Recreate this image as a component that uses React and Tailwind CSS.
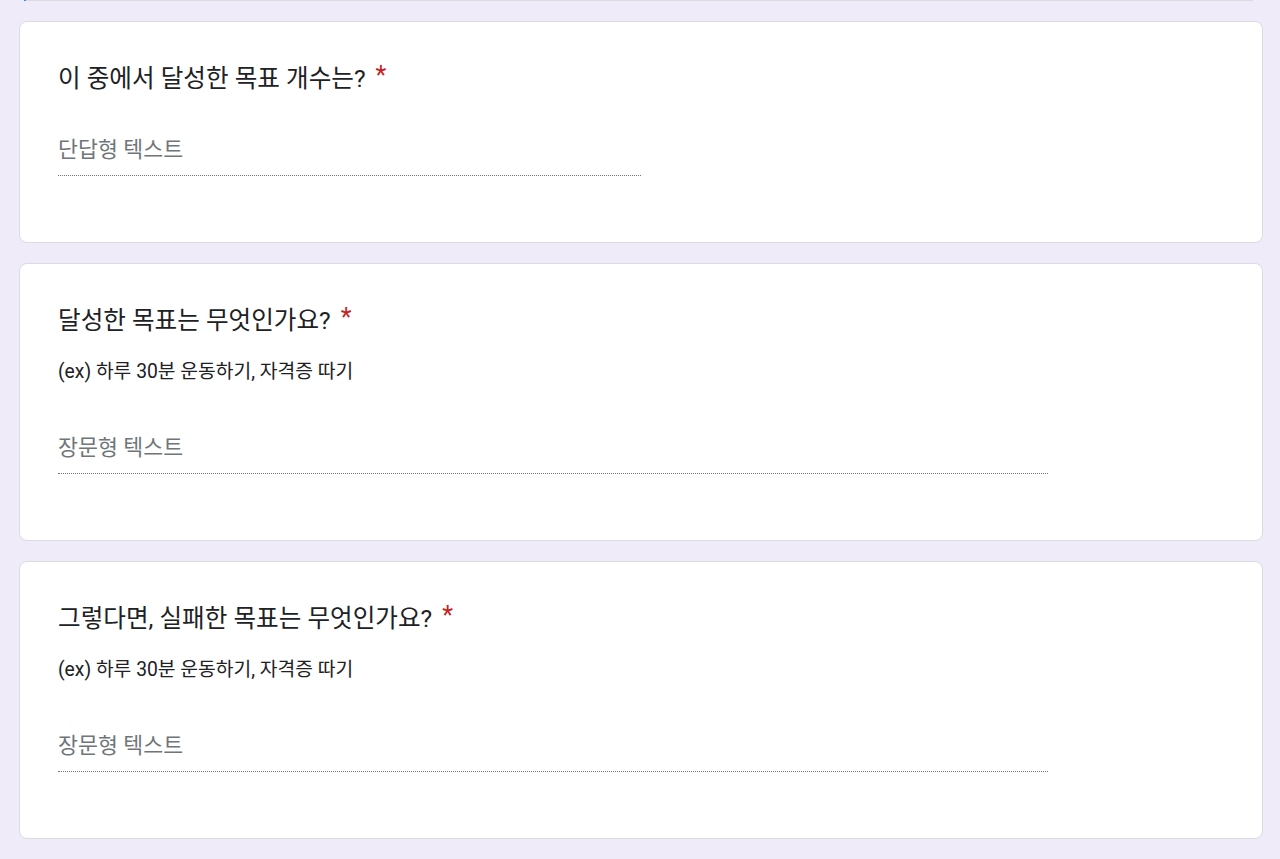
import React from "react";

const font = { fontFamily: 'Roboto, "Noto Sans CJK KR", sans-serif' };

function Card({ title, desc, placeholder, lineW }) {
  return (
    <div className="bg-white border border-[#dadce0] rounded-lg pt-[41px] pb-[66px] pl-[38px] pr-[38px]">
      <div className="flex items-start h-[32px] leading-[32px] text-[24.6px] text-[#202124]">
        <span>{title}</span>
        <span className="text-[#c5221f] ml-[10px] leading-[26px] text-[25px]">*</span>
      </div>
      {desc && (
        <div className="mt-[23px] h-[24px] leading-[24px] text-[19.3px] text-[#202124]">{desc}</div>
      )}
      <div
        className={`${desc ? "mt-[50px]" : "mt-[41px]"} h-[40px] pb-[11px] border-b border-dotted border-[#70757a] leading-[28px] text-[21.7px] text-[#70757a]`}
        style={{ width: lineW }}
      >
        {placeholder}
      </div>
    </div>
  );
}

export default function App() {
  return (
    <div className="min-h-screen bg-[#efebf8] pb-[20px]" style={font}>
      <div className="flex h-px ml-[24px] mr-[27px]">
        <div className="w-[2px] bg-[#4285f4]" />
        <div className="flex-1 bg-[#dadce0]" />
      </div>
      <div className="flex flex-col gap-[20px] mt-[20px] ml-[19px] mr-[17px]">
        <Card title="이 중에서 달성한 목표 개수는?" placeholder="단답형 텍스트" lineW={583} />
        <Card
          title="달성한 목표는 무엇인가요?"
          desc="(ex) 하루 30분 운동하기, 자격증 따기"
          placeholder="장문형 텍스트"
          lineW={990}
        />
        <Card
          title="그렇다면, 실패한 목표는 무엇인가요?"
          desc="(ex) 하루 30분 운동하기, 자격증 따기"
          placeholder="장문형 텍스트"
          lineW={990}
        />
      </div>
    </div>
  );
}
